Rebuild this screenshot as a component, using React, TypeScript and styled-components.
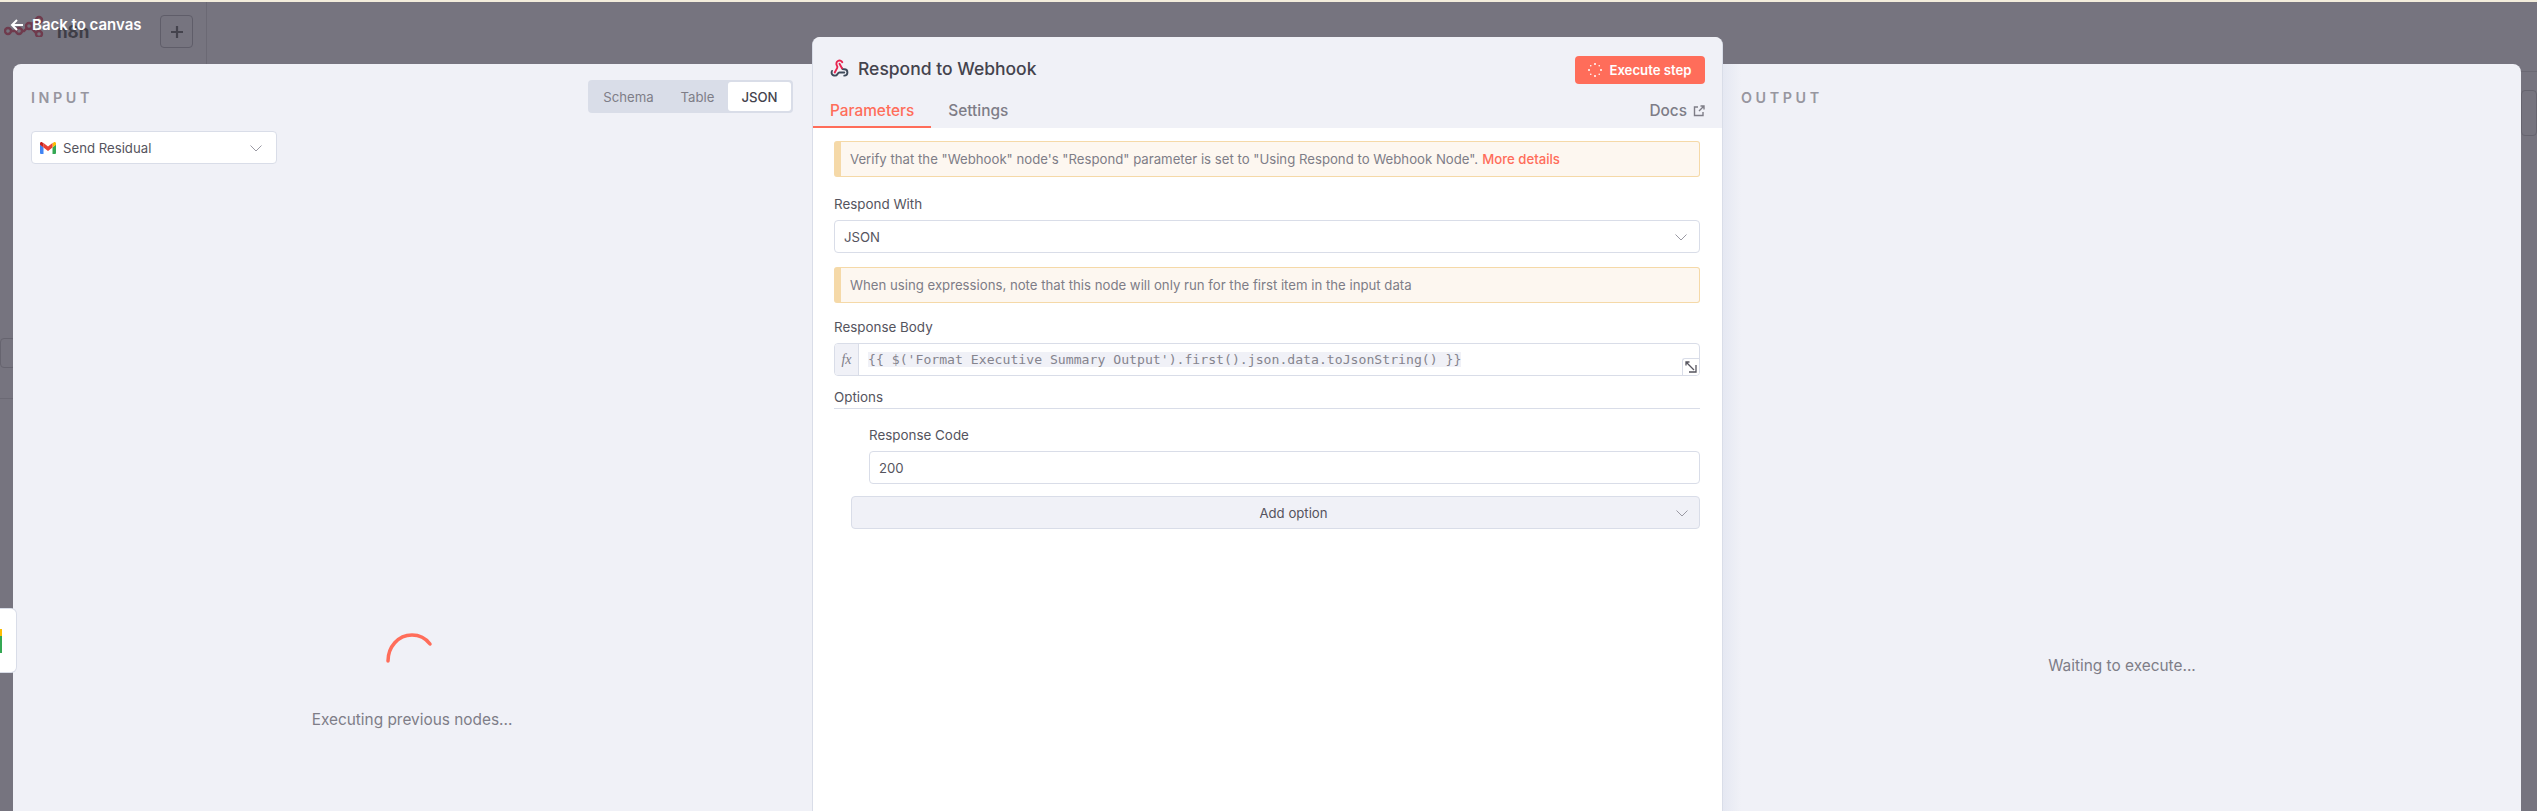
import styled, { createGlobalStyle } from 'styled-components';

const GlobalStyle = createGlobalStyle`
  html, body {
    margin: 0;
    padding: 0;
    height: 100%;
    overflow: hidden;
    background: #76747f;
    font-family: Inter, "Noto Sans", sans-serif;
  }
  * { box-sizing: border-box; }
`;

const Page = styled.div`
  position: relative;
  width: 2537px;
  height: 811px;
  overflow: hidden;
  background: #76747f;
  border-top: 2px solid #f3eddc;
`;

/* dimmed canvas behind the modal */
const CanvasBar = styled.div`
  position: absolute;
  inset: 0 0 auto 0;
  height: 62px;
  display: flex;
  align-items: flex-start;
  color: #3f3e47;
`;

const LogoBlock = styled.div`
  width: 207px;
  height: 62px;
  border-right: 1px solid #6b6974;
  display: flex;
  align-items: flex-start;
  padding: 13px 0 0 4px;
`;

const LogoWord = styled.span`
  font-size: 17px;
  font-weight: 700;
  margin: 7px 0 0 13px;
  width: 104px;
`;

const CanvasPlus = styled.div`
  width: 33px;
  height: 33px;
  border: 1px solid #5f5d69;
  border-radius: 4px;
  display: flex;
  align-items: center;
  justify-content: center;
  margin-left: -1px;
`;

const CanvasGhost = styled.div<{ $side: 'left' | 'right'; $top: number; $height: number }>`
  position: absolute;
  ${({ $side }) => $side}: 0;
  top: ${({ $top }) => $top}px;
  width: 16px;
  height: ${({ $height }) => $height}px;
  border: 1px solid #66646f;
  border-radius: 4px;
`;

const CanvasRule = styled.div<{ $side: 'left' | 'right'; $top: number }>`
  position: absolute;
  ${({ $side }) => $side}: 0;
  top: ${({ $top }) => $top}px;
  width: 16px;
  height: 1px;
  background: #6b6974;
`;

const BackLink = styled.div`
  position: absolute;
  top: 14px;
  left: 10px;
  z-index: 5;
  display: flex;
  align-items: center;
  gap: 8px;
  color: #fff;
  font-size: 15px;
  font-weight: 600;
  line-height: 18px;
`;

const Workspace = styled.div`
  position: absolute;
  inset: 35px 16px 0 13px;
  display: flex;
  align-items: stretch;
`;

const SidePanel = styled.section<{ $width: number }>`
  position: relative;
  width: ${({ $width }) => $width}px;
  margin-top: 27px;
  background: #f0f1f7;
  display: flex;
  flex-direction: column;
`;

const InputPanel = styled(SidePanel)`
  border-radius: 8px 0 0 0;
  padding: 21px 19px 0 18px;
`;

const OutputPanel = styled(SidePanel)`
  border-radius: 0 8px 0 0;
  padding: 21px 0 0 18px;
  background: linear-gradient(90deg, #e5e8f2 0, #f0f1f7 18px);
`;

const PanelHead = styled.div`
  display: flex;
  align-items: flex-start;
  justify-content: space-between;
`;

const PanelTitle = styled.div`
  font-size: 14.3px;
  font-weight: 600;
  letter-spacing: 3.6px;
  line-height: 25px;
  color: #97969f;
`;

const ViewSwitch = styled.div`
  display: flex;
  height: 33px;
  width: 205px;
  padding: 2px;
  margin-top: -5px;
  border-radius: 4px;
  background: #d9dde8;
`;

const ViewTab = styled.div<{ $width: number; $active?: boolean }>`
  width: ${({ $width }) => $width}px;
  display: flex;
  align-items: center;
  justify-content: center;
  border-radius: 3px;
  font-size: 13.2px;
  font-weight: ${({ $active }) => ($active ? 500 : 400)};
  color: ${({ $active }) => ($active ? '#44434d' : '#7e7d87')};
  background: ${({ $active }) => ($active ? '#fff' : 'transparent')};
`;

const NodePicker = styled.div`
  width: 246px;
  height: 33px;
  margin-top: 18px;
  padding: 0 12px 0 8px;
  display: flex;
  align-items: center;
  gap: 7px;
  background: #fff;
  border: 1px solid #d9dde8;
  border-radius: 4px;
  font-size: 13.2px;
  color: #55545e;
`;

const Grow = styled.span`
  flex: 1;
`;

const ExecutingState = styled.div`
  position: absolute;
  top: 567px;
  left: 299px;
  width: 200px;
  display: flex;
  flex-direction: column;
  align-items: center;
  gap: 47px;
  font-size: 15.4px;
  color: #7e7d87;
  white-space: nowrap;
`;

const WaitingText = styled.div`
  position: absolute;
  top: 593px;
  left: 299px;
  width: 200px;
  text-align: center;
  font-size: 15.4px;
  line-height: 18px;
  color: #7e7d87;
  white-space: nowrap;
`;

const EdgeCard = styled.div`
  position: absolute;
  top: 606px;
  left: -1px;
  z-index: 4;
  width: 18px;
  height: 65px;
  background: #fff;
  border: 1px solid #d9dde8;
  border-left: 0;
  border-radius: 0 6px 6px 0;
  display: flex;
  align-items: center;
`;

const CenterPanel = styled.main`
  width: 911px;
  background: #fff;
  border-radius: 8px 8px 0 0;
  border-left: 1px solid #d9dde8;
  border-right: 1px solid #d9dde8;
  display: flex;
  flex-direction: column;
  position: relative;
  z-index: 2;
`;

const CenterHead = styled.header`
  height: 91px;
  flex: none;
  background: #f0f1f7;
  border-radius: 8px 8px 0 0;
  display: flex;
  flex-direction: column;
`;

const TitleRow = styled.div`
  height: 47px;
  margin-top: 19px;
  padding: 0 17px;
  display: flex;
  align-items: flex-start;
  justify-content: space-between;
`;

const NodeTitle = styled.div`
  display: flex;
  align-items: center;
  gap: 9px;
  height: 24px;
  font-size: 17.5px;
  font-weight: 500;
  color: #44434d;
`;

const ExecuteButton = styled.button`
  width: 130px;
  height: 28px;
  border: 0;
  border-radius: 4px;
  background: #ff6d5a;
  color: #fff;
  font: 600 13.2px Inter, sans-serif;
  display: flex;
  align-items: center;
  justify-content: center;
  gap: 7px;
`;

const TabRow = styled.nav`
  display: flex;
  align-items: flex-start;
  height: 25px;
  margin-top: -1px;
  padding-right: 17px;
  font-size: 15.4px;
  font-weight: 500;
`;

const TabItem = styled.div<{ $active?: boolean }>`
  height: 26px;
  padding: 0 17px;
  line-height: 17px;
  color: ${({ $active }) => ($active ? '#ff6d5a' : '#7e7d87')};
  border-bottom: ${({ $active }) => ($active ? '2px solid #ff6d5a' : '0')};
`;

const DocsLink = styled.div`
  margin-left: auto;
  display: flex;
  align-items: center;
  gap: 6px;
  line-height: 17px;
  color: #7e7d87;
`;

const Form = styled.div`
  padding: 13px 22px 0 21px;
  display: flex;
  flex-direction: column;
`;

const Callout = styled.div<{ $top?: number }>`
  height: 36px;
  margin-top: ${({ $top }) => $top ?? 0}px;
  display: flex;
  align-items: center;
  padding-left: 9px;
  background: #fdf7f0;
  border: 1px solid #f5d9a8;
  border-left: 7px solid #f5d9a8;
  border-radius: 3px;
  font-size: 13.2px;
  color: #7e7d87;
`;

const MoreLink = styled.span`
  margin-left: 4px;
  font-weight: 500;
  color: #ff6d5a;
`;

const FieldLabel = styled.label<{ $top: number; $left?: number }>`
  display: block;
  margin: ${({ $top, $left }) => `${$top}px 0 8px ${$left ?? 0}px`};
  font-size: 13.4px;
  font-weight: 400;
  line-height: 16px;
  color: #55545e;
`;

const TextBox = styled.div<{ $left?: number; $fill?: boolean }>`
  height: 33px;
  margin-left: ${({ $left }) => $left ?? 0}px;
  padding: 0 10px 0 9px;
  display: flex;
  align-items: center;
  justify-content: space-between;
  background: ${({ $fill }) => ($fill ? '#f0f1f7' : '#fff')};
  border: 1px solid #d9dde8;
  border-radius: 4px;
  font-size: 13.2px;
  color: #55545e;
`;

const ExpressionBox = styled.div`
  position: relative;
  height: 33px;
  display: flex;
  align-items: stretch;
  border: 1px solid #d9dde8;
  border-radius: 4px;
  overflow: hidden;
`;

const FxCell = styled.div`
  width: 24px;
  display: flex;
  align-items: center;
  justify-content: center;
  background: #f0f1f7;
  border-right: 1px solid #d9dde8;
  font: italic 14px "Liberation Serif", serif;
  color: #7e7d87;
`;

const Code = styled.code`
  align-self: center;
  margin-left: 9px;
  background: #f0f1f7;
  font-family: "DejaVu Sans Mono", monospace;
  font-size: 13.15px;
  line-height: 15px;
  color: #85848e;
  white-space: pre;
`;

const ExpandHandle = styled.div`
  position: absolute;
  right: 0;
  bottom: 0;
  width: 17px;
  height: 17px;
  background: #fff;
  border-left: 1px solid #d9dde8;
  border-top: 1px solid #d9dde8;
  border-radius: 3px 0 0 0;
  display: flex;
  align-items: center;
  justify-content: center;
`;

const OptionsHeading = styled.div`
  margin-top: 13px;
  height: 20px;
  font-size: 13.4px;
  font-weight: 400;
  line-height: 16px;
  color: #55545e;
  border-bottom: 1px solid #d9dde8;
`;

const AddOption = styled(TextBox)`
  margin-top: 12px;
  padding-left: 46px;
  position: relative;
  justify-content: center;
`;

const AddChevron = styled.span`
  position: absolute;
  right: 9px;
  top: 8px;
  display: flex;
`;

function Chevron() {
  return (
    <svg width="16" height="16" viewBox="0 0 16 16" fill="none" stroke="#9a99a3" strokeWidth="1">
      <path d="M2.5 5.5 8 11l5.5-5.5" />
    </svg>
  );
}

function N8nLogo() {
  return (
    <svg width="40" height="22" viewBox="0 0 40 22" fill="none" stroke="#6f3b4d" strokeWidth="2.4">
      <circle cx="4" cy="16" r="3" />
      <circle cx="15" cy="16" r="3" />
      <circle cx="25" cy="11" r="3" />
      <circle cx="35" cy="5" r="3" />
      <circle cx="35" cy="19" r="3" />
      <path d="M7 16h5M18 16h2l3-3M27 9l5-3M27 13l5 5" />
    </svg>
  );
}

function GmailIcon() {
  return (
    <svg width="16" height="12" viewBox="0 0 16 12">
      <path d="M0 2.5V11a1 1 0 0 0 1 1h2.5V5.5z" fill="#4285f4" />
      <path d="M12.5 5.5V12H15a1 1 0 0 0 1-1V2.5z" fill="#34a853" />
      <path d="M12.5 1v4.5L16 2.8V1.5C16 .3 14.6-.4 13.7.4z" fill="#fbbc04" />
      <path d="M3.5 5.5V1L8 4.4 12.5 1v4.5L8 9z" fill="#ea4335" />
      <path d="M0 1.5v1.3l3.5 2.7V1l-1.2-.6C1.4-.4 0 .3 0 1.5z" fill="#c5221f" />
    </svg>
  );
}

function WebhookIcon() {
  return (
    <svg width="19" height="19" viewBox="0 0 24 24" fill="none" strokeWidth="2.4" strokeLinecap="round" strokeLinejoin="round">
      <path d="M18 16.98h-5.99c-1.1 0-1.95.94-2.48 1.9A4 4 0 0 1 2 17c.01-.7.2-1.4.57-2" stroke="#3f4a5a" />
      <path d="M15.13 11.73C15.66 12.7 16.9 13 18 13a4 4 0 0 1 0 8" stroke="#3f4a5a" />
      <path d="m6 17 3.13-5.78c.53-.97.1-2.18-.5-3.1a4 4 0 1 1 6.89-4.06" stroke="#e8244f" />
      <path d="m12 6 3.13 5.73" stroke="#e8244f" />
    </svg>
  );
}

function DotSpinner() {
  const dots = [0, 1, 2, 3, 4, 5, 6, 7];
  return (
    <svg width="14" height="14" viewBox="-7 -7 14 14" fill="#fff">
      {dots.map((i) => (
        <circle
          key={i}
          cx={6 * Math.cos((i * Math.PI) / 4)}
          cy={6 * Math.sin((i * Math.PI) / 4)}
          r={i % 2 ? 0.8 : 1}
        />
      ))}
    </svg>
  );
}

function ExternalIcon() {
  return (
    <svg width="12" height="12" viewBox="0 0 12 12" fill="none" stroke="#7e7d87" strokeWidth="1.4">
      <path d="M5 2H1.5v8.5H10V7M6 6l5-5M7.5 1H11v3.5" />
    </svg>
  );
}

function ExpandIcon() {
  return (
    <svg width="12" height="12" viewBox="0 0 12 12" fill="none" stroke="#55545e" strokeWidth="1.3">
      <path d="M1 4.5V1h3.5M1.5 1.5 9 9M11 4v7H4" />
    </svg>
  );
}

export default function App() {
  return (
    <Page>
      <GlobalStyle />
      {/* 後ろのキャンバス */}
      <CanvasBar>
        <LogoBlock>
          <N8nLogo />
          <LogoWord>n8n</LogoWord>
          <CanvasPlus>
            <svg width="16" height="16" viewBox="0 0 16 16" stroke="#44434d" strokeWidth="2.2">
              <path d="M8 2v12M2 8h12" />
            </svg>
          </CanvasPlus>
        </LogoBlock>
      </CanvasBar>
      <CanvasGhost $side="left" $top={336} $height={30} />
      <CanvasRule $side="left" $top={396} />
      <CanvasGhost $side="right" $top={88} $height={46} />
      <CanvasRule $side="right" $top={69} />
      <BackLink>
        <svg width="14" height="14" viewBox="0 0 14 14" fill="none" stroke="#fff" strokeWidth="2">
          <path d="M13 7H2M7 2 2 7l5 5" />
        </svg>
        Back to canvas
      </BackLink>

      <EdgeCard>
        <svg width="3" height="24" viewBox="0 0 3 24">
          <rect width="3" height="7" fill="#fbbc04" />
          <rect y="7" width="3" height="17" fill="#34a853" />
        </svg>
      </EdgeCard>

      <Workspace>
        <InputPanel $width={799}>
          <PanelHead>
            <PanelTitle>INPUT</PanelTitle>
            <ViewSwitch>
              <ViewTab $width={77}>Schema</ViewTab>
              <ViewTab $width={61}>Table</ViewTab>
              <ViewTab $width={63} $active>JSON</ViewTab>
            </ViewSwitch>
          </PanelHead>
          <NodePicker>
            <GmailIcon />
            <Grow>Send Residual</Grow>
            <Chevron />
          </NodePicker>
          <ExecutingState>
            <svg width="54" height="32" viewBox="0 0 54 32" fill="none" stroke="#ff6d5a" strokeWidth="3.5" strokeLinecap="round">
              <path d="M3 30C3 16 13 4 27 4c10 0 15 5 18 9" />
            </svg>
            Executing previous nodes...
          </ExecutingState>
        </InputPanel>

        <CenterPanel>
          <CenterHead>
            <TitleRow>
              <NodeTitle>
                <WebhookIcon />
                Respond to Webhook
              </NodeTitle>
              <ExecuteButton>
                <DotSpinner />
                Execute step
              </ExecuteButton>
            </TitleRow>
            <TabRow>
              <TabItem $active>Parameters</TabItem>
              <TabItem>Settings</TabItem>
              <DocsLink>
                Docs
                <ExternalIcon />
              </DocsLink>
            </TabRow>
          </CenterHead>
          <Form>
            <Callout>
              Verify that the "Webhook" node's "Respond" parameter is set to "Using Respond to Webhook Node".
              <MoreLink>More details</MoreLink>
            </Callout>
            <FieldLabel $top={19}>Respond With</FieldLabel>
            <TextBox>
              JSON
              <Chevron />
            </TextBox>
            <Callout $top={14}>
              When using expressions, note that this node will only run for the first item in the input data
            </Callout>
            <FieldLabel $top={16}>Response Body</FieldLabel>
            <ExpressionBox>
              <FxCell>fx</FxCell>
              <Code>{"{{ $('Format Executive Summary Output').first().json.data.toJsonString() }}"}</Code>
              <ExpandHandle>
                <ExpandIcon />
              </ExpandHandle>
            </ExpressionBox>
            <OptionsHeading>Options</OptionsHeading>
            <FieldLabel $top={18} $left={35}>Response Code</FieldLabel>
            <TextBox $left={35}>200</TextBox>
            <AddOption $left={17} $fill>
              Add option
              <AddChevron>
                <Chevron />
              </AddChevron>
            </AddOption>
          </Form>
        </CenterPanel>

        <OutputPanel $width={798}>
          <PanelTitle>OUTPUT</PanelTitle>
          <WaitingText>Waiting to execute...</WaitingText>
        </OutputPanel>
      </Workspace>
    </Page>
  );
}
